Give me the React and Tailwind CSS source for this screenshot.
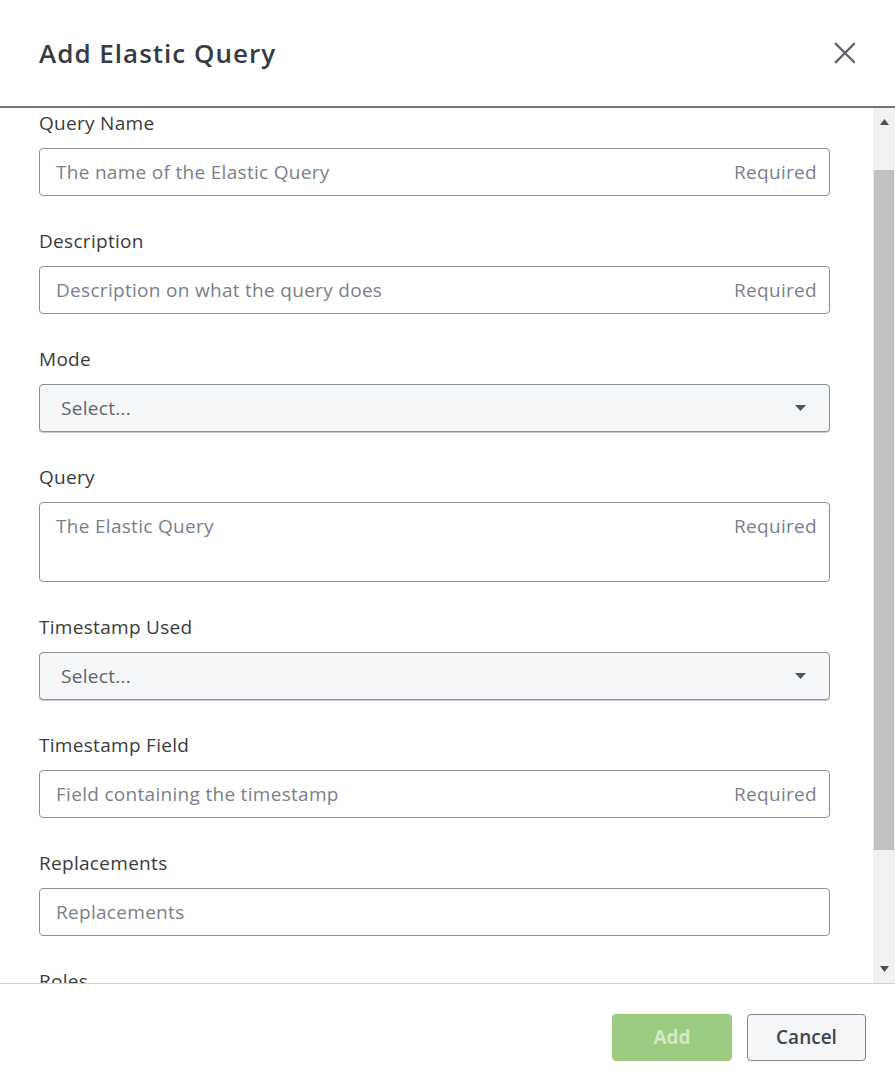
import React from "react";

const font = { fontFamily: '"Open Sans", "Lato", sans-serif' };

function Label({ children }) {
  return (
    <div className="h-[24px] leading-[24px] text-[19px] tracking-[0.3px] text-[#3b3b3b]">{children}</div>
  );
}

function TextField({ label, placeholder, required, tall }) {
  return (
    <div className="mb-[33px]">
      <Label>{label}</Label>
      <div
        className={`mt-[13px] flex items-start justify-between rounded-[4px] border border-[#8a8f99] bg-white pl-[16px] pr-[12px] ${tall ? "h-[80px]" : "h-[48px]"}`}
      >
        <span className="mt-[11px] text-[19px] leading-[24px] tracking-[0.3px] text-[#7a808b]">{placeholder}</span>
        {required && (
          <span className="mt-[11px] text-[19px] leading-[24px] tracking-[0.3px] text-[#7a808b]">Required</span>
        )}
      </div>
    </div>
  );
}

function SelectField({ label }) {
  return (
    <div className="mb-[33px]">
      <Label>{label}</Label>
      <div className="mt-[13px] flex h-[48px] items-center justify-between rounded-[4px] border border-[#8a8f99] bg-[#f5f6f8] pl-[21px] pr-[23px] shadow-[0_1px_0_#c9ccd2]">
        <span className="text-[19px] leading-[24px] tracking-[0.3px] text-[#5f6570]">Select...</span>
        <svg width="11" height="6" viewBox="0 0 11 6">
          <path d="M0 0 L11 0 L5.5 6 Z" fill="#4f5560" />
        </svg>
      </div>
    </div>
  );
}

export default function App() {
  return (
    <div className="flex h-[1090px] w-[895px] flex-col overflow-hidden bg-white" style={font}>
      <div className="flex h-[108px] shrink-0 items-center justify-between border-b-[2px] border-[#72767e] pl-[39px] pr-[40px]">
        <h1 className="text-[26px] font-semibold leading-[32px] tracking-[1px] text-[#363b45]">Add Elastic Query</h1>
        <svg width="22" height="22" viewBox="0 0 22 22">
          <path d="M3 2 L21 20 M21 2 L3 20" stroke="#5f6570" strokeWidth="2.4" strokeLinecap="square" />
        </svg>
      </div>

      <div className="flex min-h-0 flex-1">
        <div className="flex-1 overflow-hidden pl-[39px] pr-[43px] pt-[3px]">
          <TextField label="Query Name" placeholder="The name of the Elastic Query" required />
          <TextField label="Description" placeholder="Description on what the query does" required />
          <SelectField label="Mode" />
          <TextField label="Query" placeholder="The Elastic Query" required tall />
          <SelectField label="Timestamp Used" />
          <TextField label="Timestamp Field" placeholder="Field containing the timestamp" required />
          <TextField label="Replacements" placeholder="Replacements" />
          <Label>Roles</Label>
        </div>
        <div className="flex w-[22px] shrink-0 flex-col bg-[#f1f1f1]">
          <div className="flex h-[27px] items-center justify-center">
            <svg width="9" height="6" viewBox="0 0 9 6">
              <path d="M0 6 L9 6 L4.5 0 Z" fill="#505050" />
            </svg>
          </div>
          <div className="h-[35px]" />
          <div className="mx-[1px] h-[680px] bg-[#c1c1c1]" />
          <div className="flex-1" />
          <div className="flex h-[28px] items-center justify-center">
            <svg width="9" height="6" viewBox="0 0 9 6">
              <path d="M0 0 L9 0 L4.5 6 Z" fill="#505050" />
            </svg>
          </div>
        </div>
      </div>

      <div className="flex h-[107px] shrink-0 items-center justify-end gap-[15px] border-t border-[#d2d2d6] pr-[29px]">
        <button className="flex h-[47px] w-[120px] items-center justify-center rounded-[4px] bg-[#9ecb82] text-[19px] font-bold text-[#d3e8c4]">
          Add
        </button>
        <button className="flex h-[47px] w-[119px] items-center justify-center rounded-[4px] border border-[#7f848e] bg-[#f5f6f8] text-[19px] font-semibold text-[#3d4452]">
          Cancel
        </button>
      </div>
    </div>
  );
}
